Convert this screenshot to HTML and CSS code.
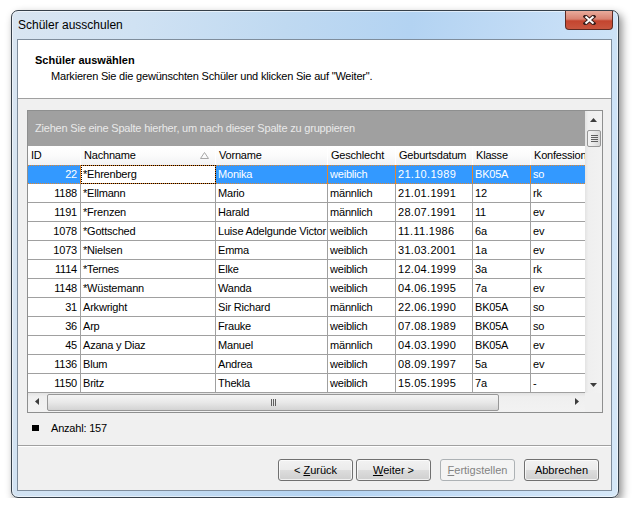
FILE: index.html
```html
<!DOCTYPE html>
<html lang="de">
<head>
  <meta charset="UTF-8" />
  <title>Schüler ausschulen</title>
  <link rel="stylesheet" href="styles.css">
</head>
<body>
  <div class="window">
    <div class="titlebar">
      <span class="title">Schüler ausschulen</span>
      <div class="close">
        <svg width="13" height="10" viewBox="0 0 13 10">
          <path d="M2.5 1.5 L10.5 8.5 M10.5 1.5 L2.5 8.5" stroke="#3b1f1c" stroke-width="4" stroke-linecap="square" fill="none"/>
          <path d="M2.5 1.5 L10.5 8.5 M10.5 1.5 L2.5 8.5" stroke="#fff" stroke-width="2" fill="none"/>
        </svg>
      </div>
    </div>

    <div class="client">
      <div class="wizard-head">
        <div class="head-title">Schüler auswählen</div>
        <div class="head-text">Markieren Sie die gewünschten Schüler und klicken Sie auf "Weiter".</div>
      </div>

      <div class="wizard-body">
        <div class="grid">
          <div class="grid-main">
            <div class="group-panel">Ziehen Sie eine Spalte hierher, um nach dieser Spalte zu gruppieren</div>
            <div class="row head">
              <div class="cell">ID</div>
              <div class="cell sorted">Nachname
                <svg class="sort" width="9" height="7" viewBox="0 0 9 7"><path d="M4.5 0.5 L8.5 6.5 L0.5 6.5 Z" fill="none" stroke="#a8a8a8"/></svg>
              </div>
              <div class="cell">Vorname</div>
              <div class="cell">Geschlecht</div>
              <div class="cell">Geburtsdatum</div>
              <div class="cell">Klasse</div>
              <div class="cell">Konfession</div>
            </div>
            <div class="row sel">
              <div class="cell num">22</div><div class="cell focus">*Ehrenberg</div><div class="cell">Monika</div><div class="cell">weiblich</div><div class="cell">21.10.1989</div><div class="cell">BK05A</div><div class="cell">so</div>
            </div>
            <div class="row">
              <div class="cell num">1188</div><div class="cell">*Ellmann</div><div class="cell">Mario</div><div class="cell">männlich</div><div class="cell">21.01.1991</div><div class="cell">12</div><div class="cell">rk</div>
            </div>
            <div class="row">
              <div class="cell num">1191</div><div class="cell">*Frenzen</div><div class="cell">Harald</div><div class="cell">männlich</div><div class="cell">28.07.1991</div><div class="cell">11</div><div class="cell">ev</div>
            </div>
            <div class="row">
              <div class="cell num">1078</div><div class="cell">*Gottsched</div><div class="cell">Luise Adelgunde Victor</div><div class="cell">weiblich</div><div class="cell">11.11.1986</div><div class="cell">6a</div><div class="cell">ev</div>
            </div>
            <div class="row">
              <div class="cell num">1073</div><div class="cell">*Nielsen</div><div class="cell">Emma</div><div class="cell">weiblich</div><div class="cell">31.03.2001</div><div class="cell">1a</div><div class="cell">ev</div>
            </div>
            <div class="row">
              <div class="cell num">1114</div><div class="cell">*Ternes</div><div class="cell">Elke</div><div class="cell">weiblich</div><div class="cell">12.04.1999</div><div class="cell">3a</div><div class="cell">rk</div>
            </div>
            <div class="row">
              <div class="cell num">1148</div><div class="cell">*Wüstemann</div><div class="cell">Wanda</div><div class="cell">weiblich</div><div class="cell">04.06.1995</div><div class="cell">7a</div><div class="cell">ev</div>
            </div>
            <div class="row">
              <div class="cell num">31</div><div class="cell">Arkwright</div><div class="cell">Sir Richard</div><div class="cell">männlich</div><div class="cell">22.06.1990</div><div class="cell">BK05A</div><div class="cell">so</div>
            </div>
            <div class="row">
              <div class="cell num">36</div><div class="cell">Arp</div><div class="cell">Frauke</div><div class="cell">weiblich</div><div class="cell">07.08.1989</div><div class="cell">BK05A</div><div class="cell">so</div>
            </div>
            <div class="row">
              <div class="cell num">45</div><div class="cell">Azana y Diaz</div><div class="cell">Manuel</div><div class="cell">männlich</div><div class="cell">04.03.1990</div><div class="cell">BK05A</div><div class="cell">ev</div>
            </div>
            <div class="row">
              <div class="cell num">1136</div><div class="cell">Blum</div><div class="cell">Andrea</div><div class="cell">weiblich</div><div class="cell">08.09.1997</div><div class="cell">5a</div><div class="cell">ev</div>
            </div>
            <div class="row">
              <div class="cell num">1150</div><div class="cell">Britz</div><div class="cell">Thekla</div><div class="cell">weiblich</div><div class="cell">15.05.1995</div><div class="cell">7a</div><div class="cell">-</div>
            </div>
          </div>

          <div class="vscroll">
            <div class="sb-btn">
              <svg width="7" height="4" viewBox="0 0 7 4"><path d="M3.5 0 L7 4 L0 4 Z" fill="#3c3c3c"/></svg>
            </div>
            <div class="vthumb">
              <span></span><span></span><span></span><span></span>
            </div>
            <div class="sb-space"></div>
            <div class="sb-btn">
              <svg width="7" height="4" viewBox="0 0 7 4"><path d="M0 0 L7 0 L3.5 4 Z" fill="#3c3c3c"/></svg>
            </div>
          </div>

          <div class="hscroll">
            <div class="sb-btn">
              <svg width="4" height="7" viewBox="0 0 4 7"><path d="M0 3.5 L4 0 L4 7 Z" fill="#3c3c3c"/></svg>
            </div>
            <div class="hthumb">
              <span></span><span></span><span></span>
            </div>
            <div class="sb-space"></div>
            <div class="sb-btn">
              <svg width="4" height="7" viewBox="0 0 4 7"><path d="M0 0 L4 3.5 L0 7 Z" fill="#3c3c3c"/></svg>
            </div>
          </div>
          <div class="corner"></div>
        </div>

        <div class="count"><span class="square"></span>Anzahl: 157</div>
      </div>

      <div class="wizard-foot">
        <button class="btn">&lt; <u>Z</u>urück</button>
        <button class="btn"><u>W</u>eiter &gt;</button>
        <button class="btn disabled"><u>F</u>ertigstellen</button>
        <button class="btn">Abbrechen</button>
      </div>
    </div>
  </div>
</body>
</html>
```

FILE: styles.css
```css
body {
  margin: 0;
  background: #fff;
  font-family: "Liberation Sans", Arial, sans-serif;
  font-size: 11px;
  letter-spacing: -0.2px;
  color: #000;
}
.window {
  margin: 10px 0 0 11px;
  width: 608px;
  height: 488px;
  box-sizing: border-box;
  border: 1px solid #36404a;
  border-radius: 7px;
  padding: 0 6px 6px 5px;
  display: flex;
  flex-direction: column;
  background: linear-gradient(100deg, #d9e5f1 0%, #d0e2f3 18%, #bfd9f1 40%, #b3d3f2 58%, #c6def6 80%, #d6e8f8 100%);
  box-shadow: inset 0 0 0 1px rgba(255, 255, 255, 0.55), 3px 4px 9px rgba(0, 0, 0, 0.45);
}
.titlebar {
  height: 28px;
  display: flex;
  align-items: flex-start;
}
.title {
  flex: 1;
  padding: 7px 0 0 1px;
  font-size: 12px;
  line-height: 14px;
  letter-spacing: 0;
}
.close {
  width: 46px;
  height: 18px;
  margin-right: -1px;
  display: flex;
  align-items: center;
  justify-content: center;
  border: 1px solid #5e2a22;
  border-top: none;
  border-radius: 0 0 4px 4px;
  background: linear-gradient(#e9ab9c 0%, #d98271 45%, #c4452f 55%, #c9563f 100%);
}
.client {
  flex: 1;
  display: flex;
  flex-direction: column;
  border: 1px solid #7f8d9c;
  background: #f0f0f0;
}
.wizard-head {
  height: 58px;
  background: #fff;
  border-bottom: 1px solid #a0a0a0;
}
.head-title {
  padding: 13px 0 0 17px;
  font-weight: bold;
  line-height: 14px;
  letter-spacing: 0;
}
.head-text {
  padding: 2px 0 0 33px;
  line-height: 14px;
}
.wizard-body {
  flex: 1;
  padding: 11px 8px 0 9px;
}
.grid {
  height: 303px;
  box-sizing: border-box;
  border: 1px solid #8e8f8f;
  display: grid;
  grid-template-columns: 557px 17px;
  grid-template-rows: 282px 19px;
  background: #fff;
}
.grid-main {
  overflow: hidden;
}
.group-panel {
  height: 35px;
  background: #a0a0a0;
  color: #e9e9e9;
  padding-left: 7px;
  line-height: 35px;
  white-space: nowrap;
}
.row {
  display: grid;
  grid-template-columns: 53px 135px 112px 68px 77px 58px 80px;
  width: max-content;
  height: 19px;
}
.cell {
  box-sizing: border-box;
  border-right: 1px solid #a0a0a0;
  border-bottom: 1px solid #a0a0a0;
  padding: 0 2px;
  line-height: 18px;
  white-space: nowrap;
  overflow: hidden;
}
.row .cell:nth-child(5) {
  letter-spacing: 0.3px;
}
.row.head .cell:nth-child(5) {
  letter-spacing: -0.2px;
}
.cell.num {
  text-align: right;
  padding-right: 3px;
}
.row.head {
  background: linear-gradient(#ffffff 0%, #fbfbfb 50%, #f1f2f4 100%);
}
.row.head .cell {
  border-right: 1px solid #ffffff;
  border-bottom: none;
  padding-left: 3px;
  line-height: 19px;
}
.cell.sorted {
  display: flex;
  align-items: center;
  justify-content: space-between;
  padding-right: 6px;
}
.row.sel {
  position: relative;
  background: #3399ff;
  color: #fff;
}
.row.sel::after {
  content: "";
  position: absolute;
  left: 0;
  right: 0;
  top: 0;
  bottom: 0;
  border-top: 1px dotted #e5862c;
  border-bottom: 1px dotted #e5862c;
}
.row.sel .cell {
  border-right-color: #e5862c;
  border-bottom: none;
}
.row.sel .cell.focus {
  background: #fff;
  color: #000;
  outline: 1px dotted #000;
  outline-offset: -1px;
}
.sb-btn {
  width: 17px;
  height: 17px;
  flex: none;
  display: flex;
  align-items: center;
  justify-content: center;
}
.sb-space {
  flex: 1;
}
.vscroll {
  display: flex;
  flex-direction: column;
  background: linear-gradient(90deg, #e3e3e3 0%, #efefef 20%, #f2f2f2 100%);
}
.vthumb {
  height: 15px;
  margin: 2px 1px 0 2px;
  border: 1px solid #979797;
  border-radius: 2px;
  background: linear-gradient(90deg, #f4f4f4 0%, #e8e8e8 50%, #d6d6d6 100%);
  display: flex;
  flex-direction: column;
  align-items: center;
  justify-content: center;
  gap: 1px;
}
.vthumb span {
  width: 7px;
  height: 1px;
  background: #5f5f5f;
}
.hscroll {
  display: flex;
  background: linear-gradient(#e3e3e3 0%, #efefef 20%, #f2f2f2 100%);
}
.hthumb {
  width: 450px;
  margin: 1px 0 1px 2px;
  border: 1px solid #979797;
  border-radius: 2px;
  background: linear-gradient(#f4f4f4 0%, #e8e8e8 50%, #d3d3d3 100%);
  display: flex;
  align-items: center;
  justify-content: center;
  gap: 1px;
}
.hthumb span {
  width: 1px;
  height: 7px;
  background: #5f5f5f;
}
.corner {
  background: #f0f0f0;
}
.count {
  display: flex;
  align-items: center;
  padding: 8px 0 0 5px;
  line-height: 14px;
}
.square {
  width: 7px;
  height: 6px;
  background: #000;
  margin-right: 12px;
}
.wizard-foot {
  height: 45px;
  box-sizing: border-box;
  border-top: 1px solid #a0a0a0;
  box-shadow: inset 0 1px 0 #fff;
  padding: 13px 12px 0 0;
  display: flex;
  justify-content: flex-end;
  gap: 9px;
}
.btn {
  width: 75px;
  height: 22px;
  padding: 0;
  font-family: "Liberation Sans", Arial, sans-serif;
  font-size: 11px;
  letter-spacing: 0;
  color: #000;
  border: 1px solid #707070;
  border-radius: 3px;
  background: linear-gradient(#f2f2f2 0%, #ebebeb 50%, #dddddd 51%, #cfcfcf 100%);
  box-shadow: inset 0 0 0 1px rgba(255, 255, 255, 0.7);
}
.btn:first-child {
  margin-right: -6px;
}
.btn.disabled {
  color: #838383;
  border-color: #adb2b5;
  background: #f4f4f4;
  box-shadow: none;
}
```
